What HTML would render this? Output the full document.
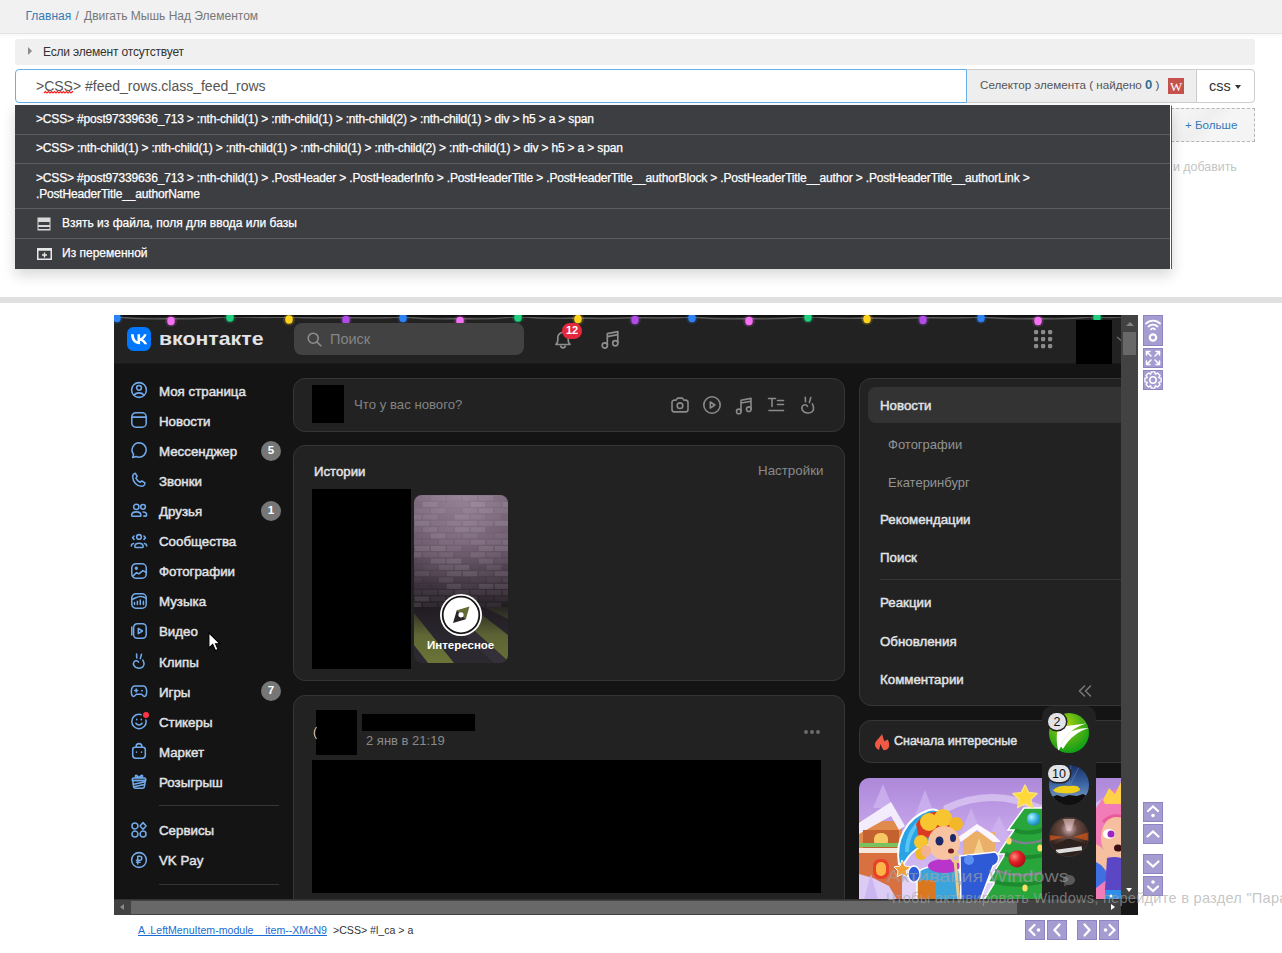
<!DOCTYPE html>
<html><head><meta charset="utf-8">
<style>
*{box-sizing:border-box;margin:0;padding:0}
html,body{width:1282px;height:953px;overflow:hidden;background:#fff;font-family:"Liberation Sans",sans-serif}
.a{position:absolute}
.t{position:absolute;white-space:nowrap;line-height:1}
svg.a{overflow:visible}
#crumb{left:0;top:0;width:1282px;height:34px;background:#f1f1f1;border-bottom:1px solid #e2e2e2;box-shadow:0 2px 4px rgba(0,0,0,.035)}
#panel{left:15px;top:39px;width:1240px;height:26px;background:#f0f0f0;border-radius:3px}
#inp{left:15px;top:69px;width:952px;height:34px;border:1px solid #66afe9;border-radius:4px 0 0 4px;background:#fff}
#addon{left:967px;top:69px;width:230px;height:34px;background:#eee;border:1px solid #ccc;border-left:0}
#cssb{left:1196px;top:69px;width:59px;height:34px;background:#fff;border:1px solid #ccc;border-radius:0 4px 4px 0}
#more{left:1171px;top:108px;width:84px;height:34px;border:1px dashed #b5b5b5;background:linear-gradient(135deg,#f7f7f7 0%,#efefef 40%,#f6f6f6 60%,#f3f3f3 100%)}
#dd{left:15px;top:105px;width:1157px;height:164px;background:#3d3e42;box-shadow:0 6px 14px rgba(0,0,0,.16);border-right:1px solid #555;border-top-right-radius:2px}
#dd .wl{position:absolute;left:1155px;top:0;width:1px;height:164px;background:#fff}
#dd .sep{position:absolute;left:0;width:1155px;height:1px;background:#5c5d61}
#dd .r{position:absolute;left:21px;color:#fff;font-size:12px;white-space:nowrap;line-height:15px;-webkit-text-stroke:0.25px #fff}
#dd .lat{letter-spacing:-0.165px}
#gbar{left:0;top:297px;width:1282px;height:6px;background:#e0e0e0}
#vk{left:114px;top:315px;width:1024px;height:600px;background:#424242;overflow:hidden}
#vp{left:0;top:0;width:1007px;height:584px;background:#141414;overflow:hidden}
.pb{position:absolute;width:20px;height:20px;background:#a59dd2;border:1px solid #8d84c3}
.pb svg{position:absolute;left:-1px;top:-1px}
</style></head><body>
<div id="crumb" class="a"></div>
<div class="t" style="left:25.5px;top:10px;font-size:12px;color:#337ab7">Главная</div><div class="t" style="left:75.5px;top:10px;font-size:12px;color:#777">/</div><div class="t" style="left:84px;top:10px;font-size:12px;color:#777">Двигать Мышь Над Элементом</div>
<div id="panel" class="a"></div>
<div class="a" style="left:28px;top:47px;width:0;height:0;border-left:4px solid #8a8a8a;border-top:4px solid transparent;border-bottom:4px solid transparent"></div>
<div class="t" style="left:43px;top:46px;font-size:12px;letter-spacing:-0.18px;color:#333">Если элемент отсутствует</div>
<div id="inp" class="a"></div>
<div class="t" style="left:36px;top:79px;font-size:14px;color:#555">&gt;CSS&gt; #feed_rows.class_feed_rows</div>
<svg class="a" style="left:44px;top:91px" width="30" height="3"><path d="M0 2 L1.5 0.5 L3 2 L4.5 0.5 L6 2 L7.5 0.5 L9 2 L10.5 0.5 L12 2 L13.5 0.5 L15 2 L16.5 0.5 L18 2 L19.5 0.5 L21 2 L22.5 0.5 L24 2 L25.5 0.5 L27 2 L28.5 0.5 L29 1" fill="none" stroke="#ff1a1a" stroke-width="1.1"/></svg>
<div id="addon" class="a"></div>
<div class="t" style="left:980px;top:78px;font-size:11.65px;color:#555">Селектор элемента ( найдено <b style="color:#31708f;font-size:13px">0</b> )</div>
<div class="a" style="left:1168px;top:78px;width:16px;height:16px;background:#c5514c;color:#fff;font-family:'Liberation Serif',serif;font-size:13px;font-weight:normal;line-height:17px;text-align:center;overflow:hidden;letter-spacing:-0.5px">W</div>
<div id="cssb" class="a"></div>
<div class="t" style="left:1209px;top:78.6px;font-size:14.4px;color:#333">css</div>
<div class="a" style="left:1234.6px;top:85px;width:0;height:0;border-top:4.2px solid #333;border-left:3.7px solid transparent;border-right:3.7px solid transparent"></div>
<div id="more" class="a"></div>
<div class="t" style="left:1185px;top:119px;font-size:11.6px;color:#337ab7">+ Больше</div>
<div class="t" style="left:1173px;top:161px;font-size:12.4px;color:#c4c4c4">и добавить</div>

<div id="dd" class="a"><div class="wl"></div>
  <div class="r lat" style="top:7px">&gt;CSS&gt; #post97339636_713 &gt; :nth-child(1) &gt; :nth-child(1) &gt; :nth-child(2) &gt; :nth-child(1) &gt; div &gt; h5 &gt; a &gt; span</div>
  <div class="sep" style="top:29px"></div>
  <div class="r lat" style="top:36px">&gt;CSS&gt; :nth-child(1) &gt; :nth-child(1) &gt; :nth-child(1) &gt; :nth-child(1) &gt; :nth-child(2) &gt; :nth-child(1) &gt; div &gt; h5 &gt; a &gt; span</div>
  <div class="sep" style="top:58px"></div>
  <div class="r lat" style="top:65px;line-height:16px">&gt;CSS&gt; #post97339636_713 &gt; :nth-child(1) &gt; .PostHeader &gt; .PostHeaderInfo &gt; .PostHeaderTitle &gt; .PostHeaderTitle__authorBlock &gt; .PostHeaderTitle__author &gt; .PostHeaderTitle__authorLink &gt;<br>.PostHeaderTitle__authorName</div>
  <div class="sep" style="top:103px"></div>
  <svg class="a" style="left:22px;top:112px" width="14" height="14"><rect x="0.5" y="0.5" width="13" height="13" fill="#d8d8d8"/><rect x="1.5" y="5" width="11" height="3" fill="#3d3e42"/><rect x="1.5" y="10" width="11" height="2" fill="#3d3e42"/></svg>
  <div class="r" style="left:47px;top:111px">Взять из файла, поля для ввода или базы</div>
  <div class="sep" style="top:133px"></div>
  <svg class="a" style="left:22px;top:143px" width="15" height="12"><rect x="0.75" y="0.75" width="13.5" height="10.5" fill="none" stroke="#e8e8e8" stroke-width="1.5"/><rect x="0.75" y="0.75" width="13.5" height="2" fill="#e8e8e8"/><path d="M7.5 4.5v5M5 7h5" stroke="#e8e8e8" stroke-width="1.4"/></svg>
  <div class="r" style="left:47px;top:141px">Из переменной</div>
</div>
<div id="gbar" class="a"></div>

<div id="vk" class="a">
  <div id="vp" class="a">
<div class="a " style="left:0px;top:0px;width:1007px;height:48px;background:#222"></div>
<div class="a " style="left:0px;top:48px;width:1007px;height:1px;background:#1b1b1b"></div>
<svg class="a" style="left:0;top:0" width="1007" height="14"><path d="M0 3 Q1.5 4.2 3 2 Q30.0 4.7 57 3.5 Q86.5 4.7 116 1.5 Q145.5 3.2 175 2.0 Q203.5 3.7 232 2.5 Q260.5 3.7 289 2 Q317.5 4.7 346 3.5 Q375.0 4.7 404 1.5 Q434.0 4.2 464 3 Q492.5 4.2 521 2.5 Q549.5 3.7 578 2 Q606.5 4.7 635 3.5 Q664.5 4.7 694 1.5 Q723.5 4.2 753 3 Q781.0 4.2 809 2.5 Q838.0 3.7 867 2 Q895.5 4.7 924 3.5 Q953.5 4.7 983 1.5 Q995.0 3.2 1007 2" fill="none" stroke="#5a5a5a" stroke-width="1.3"/><rect x="0" y="0" width="1007" height="2" fill="#111"/><ellipse cx="3" cy="3" rx="6" ry="6" fill="#2d82f5" opacity="0.18"/><ellipse cx="3" cy="3" rx="3.8" ry="4.2" fill="#2d82f5"/><ellipse cx="57" cy="6" rx="6" ry="6" fill="#f570f5" opacity="0.18"/><ellipse cx="57" cy="6" rx="3.8" ry="4.2" fill="#f570f5"/><ellipse cx="116" cy="2.5" rx="6" ry="6" fill="#1ed080" opacity="0.18"/><ellipse cx="116" cy="2.5" rx="3.8" ry="4.2" fill="#1ed080"/><ellipse cx="175" cy="4.5" rx="6" ry="6" fill="#ffd21e" opacity="0.18"/><ellipse cx="175" cy="4.5" rx="3.8" ry="4.2" fill="#ffd21e"/><ellipse cx="232" cy="5" rx="6" ry="6" fill="#b04be8" opacity="0.18"/><ellipse cx="232" cy="5" rx="3.8" ry="4.2" fill="#b04be8"/><ellipse cx="289" cy="3" rx="6" ry="6" fill="#2d82f5" opacity="0.18"/><ellipse cx="289" cy="3" rx="3.8" ry="4.2" fill="#2d82f5"/><ellipse cx="346" cy="6" rx="6" ry="6" fill="#f570f5" opacity="0.18"/><ellipse cx="346" cy="6" rx="3.8" ry="4.2" fill="#f570f5"/><ellipse cx="404" cy="2.5" rx="6" ry="6" fill="#1ed080" opacity="0.18"/><ellipse cx="404" cy="2.5" rx="3.8" ry="4.2" fill="#1ed080"/><ellipse cx="464" cy="4" rx="6" ry="6" fill="#ffd21e" opacity="0.18"/><ellipse cx="464" cy="4" rx="3.8" ry="4.2" fill="#ffd21e"/><ellipse cx="521" cy="5" rx="6" ry="6" fill="#b04be8" opacity="0.18"/><ellipse cx="521" cy="5" rx="3.8" ry="4.2" fill="#b04be8"/><ellipse cx="578" cy="3" rx="6" ry="6" fill="#2d82f5" opacity="0.18"/><ellipse cx="578" cy="3" rx="3.8" ry="4.2" fill="#2d82f5"/><ellipse cx="635" cy="6" rx="6" ry="6" fill="#f570f5" opacity="0.18"/><ellipse cx="635" cy="6" rx="3.8" ry="4.2" fill="#f570f5"/><ellipse cx="694" cy="2.5" rx="6" ry="6" fill="#1ed080" opacity="0.18"/><ellipse cx="694" cy="2.5" rx="3.8" ry="4.2" fill="#1ed080"/><ellipse cx="753" cy="4" rx="6" ry="6" fill="#ffd21e" opacity="0.18"/><ellipse cx="753" cy="4" rx="3.8" ry="4.2" fill="#ffd21e"/><ellipse cx="809" cy="5" rx="6" ry="6" fill="#b04be8" opacity="0.18"/><ellipse cx="809" cy="5" rx="3.8" ry="4.2" fill="#b04be8"/><ellipse cx="867" cy="3" rx="6" ry="6" fill="#2d82f5" opacity="0.18"/><ellipse cx="867" cy="3" rx="3.8" ry="4.2" fill="#2d82f5"/><ellipse cx="924" cy="6" rx="6" ry="6" fill="#f570f5" opacity="0.18"/><ellipse cx="924" cy="6" rx="3.8" ry="4.2" fill="#f570f5"/><ellipse cx="983" cy="2.5" rx="6" ry="6" fill="#1ed080" opacity="0.18"/><ellipse cx="983" cy="2.5" rx="3.8" ry="4.2" fill="#1ed080"/></svg>
<svg class="a" style="left:13px;top:12px;" width="24" height="24" viewBox="0 0 24 24"><rect width="24" height="24" rx="6.5" fill="#0077ff"/><path d="M12.8 17.3c-5.5 0-8.6-3.8-8.8-10h2.8c.1 4.6 2.1 6.5 3.7 6.9V7.3h2.6v3.9c1.6-.2 3.3-2 3.8-3.9h2.6c-.4 2.4-2.2 4.2-3.5 4.9 1.3.6 3.3 2.2 4.1 5.1h-2.9c-.6-1.9-2.1-3.4-4.1-3.6v3.6z" fill="#fff"/></svg>
<div class="t" style="left:45px;top:13.600000000000023px;font-size:19px;font-weight:700;color:#e1e3e6;transform:scaleX(1.12);transform-origin:0 0">вконтакте</div>
<div class="a " style="left:180px;top:8px;width:230px;height:32px;background:#424242;border-radius:8px"></div>
<svg class="a" style="left:193px;top:17px;" width="15" height="15" viewBox="0 0 15 15"><circle cx="6.2" cy="6.2" r="5" fill="none" stroke="#8d8d8d" stroke-width="1.6"/><path d="M10 10l3.8 3.8" stroke="#8d8d8d" stroke-width="1.6" stroke-linecap="round"/></svg>
<div class="t" style="left:216px;top:17px;font-size:14.5px;color:#858585">Поиск</div>
<svg class="a" style="left:438px;top:13px;" width="22" height="22" viewBox="0 0 22 22"><path d="M4 16.5c1.2-1 1.8-2.3 1.8-4.5V9.5a5.2 5.2 0 0 1 10.4 0V12c0 2.2.6 3.5 1.8 4.5z" fill="none" stroke="#8d8d8d" stroke-width="1.7" stroke-linejoin="round"/><path d="M8.7 17.5a2.3 2.3 0 0 0 4.6 0" fill="none" stroke="#8d8d8d" stroke-width="1.7"/></svg>
<div class="a " style="left:448px;top:8px;width:20px;height:16px;background:#e6283c;border-radius:8px;border:0"><div class="t" style="left:0;top:2px;width:20px;text-align:center;font-size:11px;font-weight:700;color:#fff">12</div></div>
<svg class="a" style="left:486px;top:13px;" width="22" height="22" viewBox="0 0 22 22"><path d="M7.3 17.2V5.6l10.5-1.9v11.2" fill="none" stroke="#8d8d8d" stroke-width="1.7" stroke-linejoin="round"/><path d="M7.3 8.6l10.5-1.9" stroke="#8d8d8d" stroke-width="1.7"/><circle cx="4.8" cy="17.5" r="2.6" fill="none" stroke="#8d8d8d" stroke-width="1.7"/><circle cx="15.3" cy="15.2" r="2.6" fill="none" stroke="#8d8d8d" stroke-width="1.7"/></svg>
<svg class="a" style="left:920px;top:15px;" width="19" height="19" viewBox="0 0 19 19"><rect x="0" y="0" width="4.2" height="4.2" rx="1.2" fill="#8a8a8a"/><rect x="0" y="7" width="4.2" height="4.2" rx="1.2" fill="#8a8a8a"/><rect x="0" y="14" width="4.2" height="4.2" rx="1.2" fill="#8a8a8a"/><rect x="7" y="0" width="4.2" height="4.2" rx="1.2" fill="#8a8a8a"/><rect x="7" y="7" width="4.2" height="4.2" rx="1.2" fill="#8a8a8a"/><rect x="7" y="14" width="4.2" height="4.2" rx="1.2" fill="#8a8a8a"/><rect x="14" y="0" width="4.2" height="4.2" rx="1.2" fill="#8a8a8a"/><rect x="14" y="7" width="4.2" height="4.2" rx="1.2" fill="#8a8a8a"/><rect x="14" y="14" width="4.2" height="4.2" rx="1.2" fill="#8a8a8a"/></svg>
<div class="a " style="left:962px;top:5px;width:36px;height:44px;background:#000"></div>
<svg class="a" style="left:1002px;top:21px;" width="9" height="8" viewBox="0 0 9 8"><path d="M1 1l4 3.5" stroke="#6a6a6a" stroke-width="1.4"/></svg>
<svg class="a" style="left:16px;top:66px;" width="18" height="18" viewBox="0 0 20 20"><g fill="none" stroke="#71aaeb" stroke-width="1.7" stroke-linecap="round" stroke-linejoin="round"><circle cx="10" cy="10" r="8.2"/><circle cx="10" cy="7.6" r="2.7"/><path d="M4.6 15.6c1.2-1.6 3.1-2.4 5.4-2.4s4.2.8 5.4 2.4"/></g></svg>
<div class="t" style="left:45px;top:69.80000000000001px;font-size:13.3px;color:#e1e3e6;-webkit-text-stroke:0.45px #e1e3e6">Моя страница</div>
<svg class="a" style="left:16px;top:96px;" width="18" height="18" viewBox="0 0 20 20"><g fill="none" stroke="#71aaeb" stroke-width="1.7" stroke-linecap="round" stroke-linejoin="round"><rect x="2" y="2" width="16" height="16" rx="4.5"/><path d="M2.5 6.8h15"/></g></svg>
<div class="t" style="left:45px;top:99.88px;font-size:13.3px;color:#e1e3e6;-webkit-text-stroke:0.45px #e1e3e6">Новости</div>
<svg class="a" style="left:16px;top:126px;" width="18" height="18" viewBox="0 0 20 20"><g fill="none" stroke="#71aaeb" stroke-width="1.7" stroke-linecap="round" stroke-linejoin="round"><path d="M10 2a8 8 0 0 1 0 16 8 8 0 0 1-3.2-.7L3 18.3l1-3.4A8 8 0 0 1 10 2z"/></g></svg>
<div class="t" style="left:45px;top:129.95999999999998px;font-size:13.3px;color:#e1e3e6;-webkit-text-stroke:0.45px #e1e3e6">Мессенджер</div>
<div class="a " style="left:147px;top:126px;width:20px;height:20px;background:#767676;border-radius:10px"><div class="t" style="left:0;top:4px;width:20px;text-align:center;font-size:11.5px;font-weight:700;color:#fff">5</div></div>
<svg class="a" style="left:16px;top:156px;" width="18" height="18" viewBox="0 0 20 20"><g fill="none" stroke="#71aaeb" stroke-width="1.7" stroke-linecap="round" stroke-linejoin="round"><path d="M5.8 2.5l2.2 3.4-1.4 2c.9 2 2.6 3.7 4.6 4.6l2-1.4 3.4 2.2c-.2 2.1-1.9 3.7-4 3.7C8 17 3 12 3 6.4c0-2.1 1.6-3.8 2.8-3.9z"/></g></svg>
<div class="t" style="left:45px;top:160.04000000000002px;font-size:13.3px;color:#e1e3e6;-webkit-text-stroke:0.45px #e1e3e6">Звонки</div>
<svg class="a" style="left:16px;top:186px;" width="18" height="18" viewBox="0 0 20 20"><g fill="none" stroke="#71aaeb" stroke-width="1.7" stroke-linecap="round" stroke-linejoin="round"><circle cx="7" cy="6.5" r="3"/><circle cx="14.5" cy="6.5" r="2.6"/><path d="M1.8 16c0-2.3 2.3-3.9 5.2-3.9s5.2 1.6 5.2 3.9c0 .6-.4.9-1 .9H2.8c-.6 0-1-.3-1-.9z"/><path d="M14.5 12.2c2.4 0 4 1.3 4 3.3 0 .8-.4 1.3-1.2 1.3h-2"/></g></svg>
<div class="t" style="left:45px;top:190.12px;font-size:13.3px;color:#e1e3e6;-webkit-text-stroke:0.45px #e1e3e6">Друзья</div>
<div class="a " style="left:147px;top:186px;width:20px;height:20px;background:#767676;border-radius:10px"><div class="t" style="left:0;top:4px;width:20px;text-align:center;font-size:11.5px;font-weight:700;color:#fff">1</div></div>
<svg class="a" style="left:16px;top:217px;" width="18" height="18" viewBox="0 0 20 20"><g fill="none" stroke="#71aaeb" stroke-width="1.7" stroke-linecap="round" stroke-linejoin="round"><circle cx="10" cy="5.5" r="2.6"/><path d="M5.3 16.5c0-2.4 2.1-3.9 4.7-3.9s4.7 1.5 4.7 3.9c0 .5-.4.8-1 .8H6.3c-.6 0-1-.3-1-.8z"/><path d="M4.5 4.5L2.8 6.4l1.7 1.8M15.5 4.5l1.7 1.9-1.7 1.8M1.5 15.5c0-1.3.9-2.5 2.5-2.8M18.5 15.5c0-1.3-.9-2.5-2.5-2.8"/></g></svg>
<div class="t" style="left:45px;top:220.20000000000005px;font-size:13.3px;color:#e1e3e6;-webkit-text-stroke:0.45px #e1e3e6">Сообщества</div>
<svg class="a" style="left:16px;top:247px;" width="18" height="18" viewBox="0 0 20 20"><g fill="none" stroke="#71aaeb" stroke-width="1.7" stroke-linecap="round" stroke-linejoin="round"><rect x="2" y="2" width="16" height="16" rx="4.5"/><circle cx="7" cy="6.9" r="1" fill="#71aaeb"/><path d="M3.1 15.7L7.3 11.8 9.8 13.2 14.3 9.6 18 11.5"/></g></svg>
<div class="t" style="left:45px;top:250.2800000000001px;font-size:13.3px;color:#e1e3e6;-webkit-text-stroke:0.45px #e1e3e6">Фотографии</div>
<svg class="a" style="left:16px;top:277px;" width="18" height="18" viewBox="0 0 20 20"><g fill="none" stroke="#71aaeb" stroke-width="1.7" stroke-linecap="round" stroke-linejoin="round"><rect x="2" y="2" width="16" height="16" rx="4.5"/><path d="M2.2 8C5 7.6 8 5 11.4 5S16 6 18 7M5 11.6v2.4M8.2 10.4v3.6M11.4 8.8v5.2M14.9 10.4v3.6"/></g></svg>
<div class="t" style="left:45px;top:280.3600000000001px;font-size:13.3px;color:#e1e3e6;-webkit-text-stroke:0.45px #e1e3e6">Музыка</div>
<svg class="a" style="left:16px;top:307px;" width="18" height="18" viewBox="0 0 20 20"><g fill="none" stroke="#71aaeb" stroke-width="1.7" stroke-linecap="round" stroke-linejoin="round"><rect x="4" y="2" width="14" height="16" rx="4"/><path d="M2 5.5v9M9.2 7v6l4.6-3z"/></g></svg>
<div class="t" style="left:45px;top:310.44000000000005px;font-size:13.3px;color:#e1e3e6;-webkit-text-stroke:0.45px #e1e3e6">Видео</div>
<svg class="a" style="left:16px;top:337px;" width="18" height="18" viewBox="0 0 20 20"><g fill="none" stroke="#71aaeb" stroke-width="1.7" stroke-linecap="round" stroke-linejoin="round"><path d="M7.3 2.3l.2 4.4M12.8 2.5l-1.4 4.9M9.5 11.3C8.5 9.5 5.8 9.2 4.5 11 3 13 4 17.5 9.5 18 14 18.3 16 15.5 15.5 12.5 15.3 11 14.8 9.8 14.3 8.9"/></g></svg>
<div class="t" style="left:45px;top:340.52px;font-size:13.3px;color:#e1e3e6;-webkit-text-stroke:0.45px #e1e3e6">Клипы</div>
<svg class="a" style="left:16px;top:367px;" width="18" height="18" viewBox="0 0 20 20"><g fill="none" stroke="#71aaeb" stroke-width="1.7" stroke-linecap="round" stroke-linejoin="round"><path d="M5.5 4.5h9c2.5 0 3.8 2.1 4 5.5.2 3.4-.7 6-2.6 6-1.4 0-2.2-2.3-3.4-2.3H7.5C6.3 13.7 5.5 16 4.1 16 2.2 16 1.3 13.4 1.5 10c.2-3.4 1.5-5.5 4-5.5z"/><path d="M5.2 9.4h3.4M6.9 7.7v3.4M13 9.8h.6"/></g></svg>
<div class="t" style="left:45px;top:370.6px;font-size:13.3px;color:#e1e3e6;-webkit-text-stroke:0.45px #e1e3e6">Игры</div>
<div class="a " style="left:147px;top:366px;width:20px;height:20px;background:#767676;border-radius:10px"><div class="t" style="left:0;top:4px;width:20px;text-align:center;font-size:11.5px;font-weight:700;color:#fff">7</div></div>
<svg class="a" style="left:16px;top:397px;" width="18" height="18" viewBox="0 0 20 20"><g fill="none" stroke="#71aaeb" stroke-width="1.7" stroke-linecap="round" stroke-linejoin="round"><circle cx="10" cy="10.5" r="8"/><path d="M6.6 12.5c.8 1.2 2 1.9 3.4 1.9s2.6-.7 3.4-1.9M7.5 8.2v.5M12.5 8.2v.5"/></g></svg>
<div class="t" style="left:45px;top:400.68000000000006px;font-size:13.3px;color:#e1e3e6;-webkit-text-stroke:0.45px #e1e3e6">Стикеры</div>
<svg class="a" style="left:16px;top:427px;" width="18" height="18" viewBox="0 0 20 20"><g fill="none" stroke="#71aaeb" stroke-width="1.7" stroke-linecap="round" stroke-linejoin="round"><path d="M3 8.5c0-1.7 1.1-2.6 2.6-2.6h8.8c1.5 0 2.6.9 2.6 2.6v6.3c0 1.9-1.4 3.2-3.3 3.2H6.3C4.4 18 3 16.7 3 14.8z"/><path d="M6.8 5.9V5a3.2 3.2 0 0 1 6.4 0v.9M7.2 11v.4M12.8 11v.4"/></g></svg>
<div class="t" style="left:45px;top:430.76px;font-size:13.3px;color:#e1e3e6;-webkit-text-stroke:0.45px #e1e3e6">Маркет</div>
<svg class="a" style="left:16px;top:457px;" width="18" height="18" viewBox="0 0 20 20"><g fill="none" stroke="#71aaeb" stroke-width="1.7" stroke-linecap="round" stroke-linejoin="round"><path d="M3 9.5h14l-1 6.8c-.2 1.2-1.2 1.7-2.4 1.7H6.4c-1.2 0-2.2-.5-2.4-1.7z"/><path d="M2.5 8.3c0-1 .6-1.6 1.6-1.6h11.8c1 0 1.6.6 1.6 1.6v1.2H2.5zM10 6.7C8.2 3.5 6 2.8 6 4.5 6 6 8 6.5 10 6.7c2-.2 4-.7 4-2.2 0-1.7-2.2-1-4 2.2zM4 13.5l12-2.5M4.5 16.5l11.5-2.5"/></g></svg>
<div class="t" style="left:45px;top:460.84000000000003px;font-size:13.3px;color:#e1e3e6;-webkit-text-stroke:0.45px #e1e3e6">Розыгрыш</div>
<div class="a " style="left:29px;top:397px;width:6px;height:6px;background:#ff3347;border-radius:3px;box-shadow:0 0 0 1.5px #141414"></div>
<div class="a " style="left:45px;top:490px;width:120px;height:1px;background:#363636"></div>
<svg class="a" style="left:16px;top:506px;" width="18" height="18" viewBox="0 0 20 20"><g fill="none" stroke="#71aaeb" stroke-width="1.7" stroke-linecap="round" stroke-linejoin="round"><circle cx="5.5" cy="5.5" r="3.3"/><circle cx="5.5" cy="14.5" r="3.3"/><circle cx="14.5" cy="14.5" r="3.3"/><path d="M14.5 1.8l3.4 3.7-3.4 3.7-3.4-3.7z"/></g></svg>
<div class="t" style="left:45px;top:509px;font-size:13.3px;color:#e1e3e6;-webkit-text-stroke:0.45px #e1e3e6">Сервисы</div>
<svg class="a" style="left:16px;top:536px;" width="18" height="18" viewBox="0 0 20 20"><g fill="none" stroke="#71aaeb" stroke-width="1.7" stroke-linecap="round" stroke-linejoin="round"><circle cx="10" cy="10" r="8.2"/><path d="M8.6 14.5V5.8h2.3a2.2 2.2 0 0 1 0 4.4H7.2M7.2 12.5h4"/></g></svg>
<div class="t" style="left:45px;top:539px;font-size:13.3px;color:#e1e3e6;-webkit-text-stroke:0.45px #e1e3e6">VK Pay</div>
<div class="a " style="left:45px;top:569px;width:120px;height:1px;background:#363636"></div>
<svg class="a" style="left:94px;top:317px;" width="14" height="20" viewBox="0 0 14 20"><path d="M0.9 0.9V15.9L4.7 12.5 7.4 18.5 10 17.4 7.5 11.8H12z" fill="#fff" stroke="#000" stroke-width="1.1" stroke-linejoin="miter"/></svg>
<div class="a " style="left:179px;top:63px;width:552px;height:54px;background:#222;border:1px solid #363636;border-radius:12px"></div>
<div class="a " style="left:198px;top:70px;width:32px;height:38px;background:#000"></div>
<div class="t" style="left:240px;top:83px;font-size:13.2px;color:#828282">Что у вас нового?</div>
<svg class="a" style="left:556px;top:80px;" width="20" height="20" viewBox="0 0 20 20"><g fill="none" stroke="#8a8a8a" stroke-width="1.6" stroke-linecap="round" stroke-linejoin="round"><path d="M2 7.5c0-1.4 1-2.4 2.4-2.4h1.8l1.3-2h5l1.3 2h1.8c1.4 0 2.4 1 2.4 2.4v7c0 1.4-1 2.4-2.4 2.4H4.4C3 16.9 2 15.9 2 14.5z"/><circle cx="10" cy="10.7" r="2.8"/></g></svg>
<svg class="a" style="left:588px;top:80px;" width="20" height="20" viewBox="0 0 20 20"><g fill="none" stroke="#8a8a8a" stroke-width="1.6" stroke-linecap="round" stroke-linejoin="round"><circle cx="10" cy="10" r="8.2"/><path d="M8.3 7v6l4.6-3z"/></g></svg>
<svg class="a" style="left:620px;top:80px;" width="20" height="20" viewBox="0 0 20 20"><g fill="none" stroke="#8a8a8a" stroke-width="1.6" stroke-linecap="round" stroke-linejoin="round"><path d="M7 16.2V5.2l10-1.8v10.5M7 8l10-1.8"/><circle cx="4.8" cy="16.4" r="2.3"/><circle cx="14.8" cy="14.2" r="2.3"/></g></svg>
<svg class="a" style="left:652px;top:80px;" width="20" height="20" viewBox="0 0 20 20"><g fill="none" stroke="#8a8a8a" stroke-width="1.6" stroke-linecap="round" stroke-linejoin="round"><path d="M2.5 3.5h7M6 3.5v8M11.5 5.5h6M11.5 9.5h6M3 15.5h14.5"/></g></svg>
<svg class="a" style="left:684px;top:80px;" width="20" height="20" viewBox="0 0 20 20"><g fill="none" stroke="#8a8a8a" stroke-width="1.6" stroke-linecap="round" stroke-linejoin="round"><path d="M7.3 2.3l.2 4.4M12.8 2.5l-1.4 4.9M9.5 11.3C8.5 9.5 5.8 9.2 4.5 11 3 13 4 17.5 9.5 18 14 18.3 16 15.5 15.5 12.5 15.3 11 14.8 9.8 14.3 8.9"/></g></svg>
<div class="a " style="left:179px;top:130px;width:552px;height:236px;background:#222;border:1px solid #363636;border-radius:12px"></div>
<div class="t" style="left:200px;top:149.5px;font-size:13.2px;color:#e1e3e6;-webkit-text-stroke:0.45px #e1e3e6">Истории</div>
<div class="t" style="left:644px;top:149px;font-size:13.35px;color:#8a8a8a">Настройки</div>
<div class="a " style="left:198px;top:174px;width:99px;height:180px;background:#000"></div>
<svg class="a" style="left:300px;top:180px" width="94" height="168" viewBox="0 0 94 168">
<defs>
<clipPath id="scl"><rect width="94" height="168" rx="8"/></clipPath>
<linearGradient id="sg" x1="0" y1="0" x2="0" y2="1"><stop offset="0" stop-color="#6e5c6e"/><stop offset=".3" stop-color="#5a485a"/><stop offset=".55" stop-color="#372c37"/><stop offset=".68" stop-color="#1c181d"/></linearGradient>
<radialGradient id="sr" cx=".5" cy="0" r=".9"><stop offset="0" stop-color="#b8a2b8" stop-opacity=".5"/><stop offset="1" stop-color="#b8a2b8" stop-opacity="0"/></radialGradient>
<linearGradient id="fl" x1="0" y1="0" x2="0" y2="1"><stop offset="0" stop-color="#1e1a1f" stop-opacity=".85"/><stop offset=".5" stop-color="#1e1a1f" stop-opacity=".15"/><stop offset="1" stop-color="#1e1a1f" stop-opacity="0"/></linearGradient>
</defs>
<g clip-path="url(#scl)">
<rect width="94" height="168" fill="url(#sg)"/>
<rect width="94" height="112" fill="url(#sr)"/>
<rect x="0.6" y="0.6" width="14.8" height="5.1" fill="#fff" opacity="0.039"/><rect x="16.6" y="0.6" width="14.8" height="5.1" fill="#fff" opacity="0.075"/><rect x="32.6" y="0.6" width="14.8" height="5.1" fill="#fff" opacity="0.054"/><rect x="48.6" y="0.6" width="14.8" height="5.1" fill="#fff" opacity="0.082"/><rect x="64.6" y="0.6" width="14.8" height="5.1" fill="#fff" opacity="0.085"/><rect x="80.6" y="0.6" width="14.8" height="5.1" fill="#fff" opacity="0.018"/><rect x="-7.4" y="6.9" width="14.8" height="5.1" fill="#fff" opacity="0.012"/><rect x="8.6" y="6.9" width="14.8" height="5.1" fill="#fff" opacity="0.110"/><rect x="24.6" y="6.9" width="14.8" height="5.1" fill="#fff" opacity="0.041"/><rect x="40.6" y="6.9" width="14.8" height="5.1" fill="#fff" opacity="0.038"/><rect x="56.6" y="6.9" width="14.8" height="5.1" fill="#fff" opacity="0.129"/><rect x="72.6" y="6.9" width="14.8" height="5.1" fill="#fff" opacity="0.066"/><rect x="88.6" y="6.9" width="14.8" height="5.1" fill="#fff" opacity="0.110"/><rect x="0.6" y="13.2" width="14.8" height="5.1" fill="#fff" opacity="0.067"/><rect x="16.6" y="13.2" width="14.8" height="5.1" fill="#fff" opacity="0.087"/><rect x="32.6" y="13.2" width="14.8" height="5.1" fill="#fff" opacity="0.028"/><rect x="48.6" y="13.2" width="14.8" height="5.1" fill="#fff" opacity="0.086"/><rect x="64.6" y="13.2" width="14.8" height="5.1" fill="#fff" opacity="0.114"/><rect x="80.6" y="13.2" width="14.8" height="5.1" fill="#fff" opacity="0.073"/><rect x="-7.4" y="19.5" width="14.8" height="5.1" fill="#fff" opacity="0.099"/><rect x="8.6" y="19.5" width="14.8" height="5.1" fill="#fff" opacity="0.091"/><rect x="24.6" y="19.5" width="14.8" height="5.1" fill="#fff" opacity="0.018"/><rect x="40.6" y="19.5" width="14.8" height="5.1" fill="#fff" opacity="0.101"/><rect x="56.6" y="19.5" width="14.8" height="5.1" fill="#fff" opacity="0.081"/><rect x="72.6" y="19.5" width="14.8" height="5.1" fill="#fff" opacity="0.046"/><rect x="88.6" y="19.5" width="14.8" height="5.1" fill="#fff" opacity="0.014"/><rect x="0.6" y="25.8" width="14.8" height="5.1" fill="#fff" opacity="0.114"/><rect x="16.6" y="25.8" width="14.8" height="5.1" fill="#fff" opacity="0.067"/><rect x="32.6" y="25.8" width="14.8" height="5.1" fill="#fff" opacity="0.096"/><rect x="48.6" y="25.8" width="14.8" height="5.1" fill="#fff" opacity="0.115"/><rect x="64.6" y="25.8" width="14.8" height="5.1" fill="#fff" opacity="0.096"/><rect x="80.6" y="25.8" width="14.8" height="5.1" fill="#fff" opacity="0.121"/><rect x="-7.4" y="32.1" width="14.8" height="5.1" fill="#fff" opacity="0.057"/><rect x="8.6" y="32.1" width="14.8" height="5.1" fill="#fff" opacity="0.106"/><rect x="24.6" y="32.1" width="14.8" height="5.1" fill="#fff" opacity="0.063"/><rect x="40.6" y="32.1" width="14.8" height="5.1" fill="#fff" opacity="0.122"/><rect x="56.6" y="32.1" width="14.8" height="5.1" fill="#fff" opacity="0.115"/><rect x="72.6" y="32.1" width="14.8" height="5.1" fill="#fff" opacity="0.022"/><rect x="88.6" y="32.1" width="14.8" height="5.1" fill="#fff" opacity="0.026"/><rect x="0.6" y="38.4" width="14.8" height="5.1" fill="#fff" opacity="0.036"/><rect x="16.6" y="38.4" width="14.8" height="5.1" fill="#fff" opacity="0.126"/><rect x="32.6" y="38.4" width="14.8" height="5.1" fill="#fff" opacity="0.062"/><rect x="48.6" y="38.4" width="14.8" height="5.1" fill="#fff" opacity="0.085"/><rect x="64.6" y="38.4" width="14.8" height="5.1" fill="#fff" opacity="0.046"/><rect x="80.6" y="38.4" width="14.8" height="5.1" fill="#fff" opacity="0.071"/><rect x="-7.4" y="44.7" width="14.8" height="5.1" fill="#fff" opacity="0.056"/><rect x="8.6" y="44.7" width="14.8" height="5.1" fill="#fff" opacity="0.052"/><rect x="24.6" y="44.7" width="14.8" height="5.1" fill="#fff" opacity="0.080"/><rect x="40.6" y="44.7" width="14.8" height="5.1" fill="#fff" opacity="0.080"/><rect x="56.6" y="44.7" width="14.8" height="5.1" fill="#fff" opacity="0.119"/><rect x="72.6" y="44.7" width="14.8" height="5.1" fill="#fff" opacity="0.092"/><rect x="88.6" y="44.7" width="14.8" height="5.1" fill="#fff" opacity="0.121"/><rect x="0.6" y="51.0" width="14.8" height="5.1" fill="#fff" opacity="0.113"/><rect x="16.6" y="51.0" width="14.8" height="5.1" fill="#fff" opacity="0.129"/><rect x="32.6" y="51.0" width="14.8" height="5.1" fill="#fff" opacity="0.091"/><rect x="48.6" y="51.0" width="14.8" height="5.1" fill="#fff" opacity="0.030"/><rect x="64.6" y="51.0" width="14.8" height="5.1" fill="#fff" opacity="0.113"/><rect x="80.6" y="51.0" width="14.8" height="5.1" fill="#fff" opacity="0.126"/><rect x="-7.4" y="57.3" width="14.8" height="5.1" fill="#fff" opacity="0.119"/><rect x="8.6" y="57.3" width="14.8" height="5.1" fill="#fff" opacity="0.078"/><rect x="24.6" y="57.3" width="14.8" height="5.1" fill="#fff" opacity="0.096"/><rect x="40.6" y="57.3" width="14.8" height="5.1" fill="#fff" opacity="0.035"/><rect x="56.6" y="57.3" width="14.8" height="5.1" fill="#fff" opacity="0.110"/><rect x="72.6" y="57.3" width="14.8" height="5.1" fill="#fff" opacity="0.079"/><rect x="88.6" y="57.3" width="14.8" height="5.1" fill="#fff" opacity="0.044"/><rect x="0.6" y="63.6" width="14.8" height="5.1" fill="#fff" opacity="0.018"/><rect x="16.6" y="63.6" width="14.8" height="5.1" fill="#fff" opacity="0.112"/><rect x="32.6" y="63.6" width="14.8" height="5.1" fill="#fff" opacity="0.129"/><rect x="48.6" y="63.6" width="14.8" height="5.1" fill="#fff" opacity="0.021"/><rect x="64.6" y="63.6" width="14.8" height="5.1" fill="#fff" opacity="0.106"/><rect x="80.6" y="63.6" width="14.8" height="5.1" fill="#fff" opacity="0.059"/><rect x="-7.4" y="69.9" width="14.8" height="5.1" fill="#fff" opacity="0.028"/><rect x="8.6" y="69.9" width="14.8" height="5.1" fill="#fff" opacity="0.045"/><rect x="24.6" y="69.9" width="14.8" height="5.1" fill="#fff" opacity="0.102"/><rect x="40.6" y="69.9" width="14.8" height="5.1" fill="#fff" opacity="0.115"/><rect x="56.6" y="69.9" width="14.8" height="5.1" fill="#fff" opacity="0.015"/><rect x="72.6" y="69.9" width="14.8" height="5.1" fill="#fff" opacity="0.084"/><rect x="88.6" y="69.9" width="14.8" height="5.1" fill="#fff" opacity="0.015"/><rect x="0.6" y="76.2" width="14.8" height="5.1" fill="#fff" opacity="0.096"/><rect x="16.6" y="76.2" width="14.8" height="5.1" fill="#fff" opacity="0.050"/><rect x="32.6" y="76.2" width="14.8" height="5.1" fill="#fff" opacity="0.116"/><rect x="48.6" y="76.2" width="14.8" height="5.1" fill="#fff" opacity="0.128"/><rect x="64.6" y="76.2" width="14.8" height="5.1" fill="#fff" opacity="0.071"/><rect x="80.6" y="76.2" width="14.8" height="5.1" fill="#fff" opacity="0.130"/><rect x="-7.4" y="82.5" width="14.8" height="5.1" fill="#fff" opacity="0.047"/><rect x="8.6" y="82.5" width="14.8" height="5.1" fill="#fff" opacity="0.019"/><rect x="24.6" y="82.5" width="14.8" height="5.1" fill="#fff" opacity="0.082"/><rect x="40.6" y="82.5" width="14.8" height="5.1" fill="#fff" opacity="0.014"/><rect x="56.6" y="82.5" width="14.8" height="5.1" fill="#fff" opacity="0.034"/><rect x="72.6" y="82.5" width="14.8" height="5.1" fill="#fff" opacity="0.059"/><rect x="88.6" y="82.5" width="14.8" height="5.1" fill="#fff" opacity="0.083"/><rect x="0.6" y="88.8" width="14.8" height="5.1" fill="#fff" opacity="0.029"/><rect x="16.6" y="88.8" width="14.8" height="5.1" fill="#fff" opacity="0.015"/><rect x="32.6" y="88.8" width="14.8" height="5.1" fill="#fff" opacity="0.114"/><rect x="48.6" y="88.8" width="14.8" height="5.1" fill="#fff" opacity="0.048"/><rect x="64.6" y="88.8" width="14.8" height="5.1" fill="#fff" opacity="0.125"/><rect x="80.6" y="88.8" width="14.8" height="5.1" fill="#fff" opacity="0.118"/><rect x="-7.4" y="95.1" width="14.8" height="5.1" fill="#fff" opacity="0.055"/><rect x="8.6" y="95.1" width="14.8" height="5.1" fill="#fff" opacity="0.065"/><rect x="24.6" y="95.1" width="14.8" height="5.1" fill="#fff" opacity="0.072"/><rect x="40.6" y="95.1" width="14.8" height="5.1" fill="#fff" opacity="0.087"/><rect x="56.6" y="95.1" width="14.8" height="5.1" fill="#fff" opacity="0.081"/><rect x="72.6" y="95.1" width="14.8" height="5.1" fill="#fff" opacity="0.077"/><rect x="88.6" y="95.1" width="14.8" height="5.1" fill="#fff" opacity="0.084"/><rect x="0.6" y="101.4" width="14.8" height="5.1" fill="#fff" opacity="0.123"/><rect x="16.6" y="101.4" width="14.8" height="5.1" fill="#fff" opacity="0.071"/><rect x="32.6" y="101.4" width="14.8" height="5.1" fill="#fff" opacity="0.062"/><rect x="48.6" y="101.4" width="14.8" height="5.1" fill="#fff" opacity="0.096"/><rect x="64.6" y="101.4" width="14.8" height="5.1" fill="#fff" opacity="0.039"/><rect x="80.6" y="101.4" width="14.8" height="5.1" fill="#fff" opacity="0.046"/><rect x="-7.4" y="107.7" width="14.8" height="5.1" fill="#fff" opacity="0.127"/><rect x="8.6" y="107.7" width="14.8" height="5.1" fill="#fff" opacity="0.073"/><rect x="24.6" y="107.7" width="14.8" height="5.1" fill="#fff" opacity="0.076"/><rect x="40.6" y="107.7" width="14.8" height="5.1" fill="#fff" opacity="0.011"/><rect x="56.6" y="107.7" width="14.8" height="5.1" fill="#fff" opacity="0.060"/><rect x="72.6" y="107.7" width="14.8" height="5.1" fill="#fff" opacity="0.080"/><rect x="88.6" y="107.7" width="14.8" height="5.1" fill="#fff" opacity="0.012"/>
<rect y="112" width="94" height="56" fill="#2d2931"/>
<path d="M0 118L40 168H14L0 150z" fill="#6b7438"/>
<path d="M34 112L58 112 94 140 94 166z" fill="#6b7438" opacity=".95"/>
<path d="M70 112H94V124z" fill="#5d6534"/>
<path d="M20 112H34L94 166V168H80z" fill="#3a3540" opacity=".6"/>
<rect y="112" width="94" height="56" fill="url(#fl)"/>
</g>
</svg>
<svg class="a" style="left:326px;top:279px;" width="42" height="42" viewBox="0 0 42 42"><circle cx="21" cy="21" r="21" fill="#fff"/><circle cx="21" cy="21" r="18.3" fill="none" stroke="#1a1618" stroke-width="1.8"/><path d="M29.5 12.5L25.8 25.2 16.8 16.2z" fill="#636a33"/><path d="M13 29L16.8 16.2 25.8 25.2z" fill="#2a2428"/><circle cx="21" cy="20.8" r="2.6" fill="#fff"/></svg>
<div class="t" style="left:313px;top:325px;font-size:11.5px;font-weight:700;color:#fff">Интересное</div>
<div class="a " style="left:179px;top:380px;width:552px;height:260px;background:#222;border:1px solid #363636;border-radius:12px"></div>
<div class="a " style="left:202px;top:395px;width:41px;height:45px;background:#000"></div>
<div class="a " style="left:248px;top:399px;width:113px;height:17px;background:#000"></div>
<div class="t" style="left:252px;top:419px;font-size:13px;color:#8a8a8a">2 янв в 21:19</div>
<svg class="a" style="left:689px;top:413px;" width="18" height="8" viewBox="0 0 18 8"><circle cx="3" cy="4" r="1.9" fill="#6e6e6e"/><circle cx="9" cy="4" r="1.9" fill="#6e6e6e"/><circle cx="15" cy="4" r="1.9" fill="#6e6e6e"/></svg>
<div class="a " style="left:198px;top:445px;width:509px;height:133px;background:#000"></div>
<svg class="a" style="left:199px;top:411px;" width="4" height="14" viewBox="0 0 4 14"><path d="M3.5 1C2 3 1.2 5 1.2 7s.8 4 2.3 6" fill="none" stroke="#c8b49a" stroke-width="1.2"/></svg>
<div class="a " style="left:745px;top:63px;width:280px;height:328px;background:#222;border:1px solid #363636;border-radius:12px"></div>
<div class="a " style="left:754px;top:72px;width:270px;height:36px;background:#333;border-radius:8px"></div>
<div class="t" style="left:766px;top:84px;font-size:13.3px;color:#e1e3e6;-webkit-text-stroke:0.45px #e1e3e6">Новости</div>
<div class="t" style="left:774px;top:123px;font-size:13px;color:#939393">Фотографии</div>
<div class="t" style="left:774px;top:161px;font-size:13px;color:#939393">Екатеринбург</div>
<div class="t" style="left:766px;top:198px;font-size:13.3px;color:#e1e3e6;-webkit-text-stroke:0.45px #e1e3e6">Рекомендации</div>
<div class="t" style="left:766px;top:236px;font-size:13.3px;color:#e1e3e6;-webkit-text-stroke:0.45px #e1e3e6">Поиск</div>
<div class="a " style="left:766px;top:264px;width:260px;height:1px;background:#363636"></div>
<div class="t" style="left:766px;top:281px;font-size:13.3px;color:#e1e3e6;-webkit-text-stroke:0.45px #e1e3e6">Реакции</div>
<div class="t" style="left:766px;top:320px;font-size:13.3px;color:#e1e3e6;-webkit-text-stroke:0.45px #e1e3e6">Обновления</div>
<div class="t" style="left:766px;top:358px;font-size:13.3px;color:#e1e3e6;-webkit-text-stroke:0.45px #e1e3e6">Комментарии</div>
<svg class="a" style="left:963px;top:369px;" width="16" height="14" viewBox="0 0 16 14"><path d="M7.5 2L2.5 7l5 5M13.5 2l-5 5 5 5" fill="none" stroke="#777" stroke-width="1.6" stroke-linecap="round" stroke-linejoin="round"/></svg>
<div class="a " style="left:745px;top:405px;width:280px;height:43px;background:#222;border:1px solid #363636;border-radius:12px"></div>
<svg class="a" style="left:760px;top:418px;" width="17" height="18" viewBox="0 0 17 18"><path d="M8 1C8.6 3.5 9.6 5.6 10.2 8.2L13.6 6.4C15 8.5 15.4 11 15.1 13.2 14.6 16 12.2 17.4 9.6 17.3 8.2 15.2 7.2 13.2 6.6 11 6 13 5.5 15 5 17 2.6 16 1 14 1 11.5 1 8 5.2 5.6 8 1z" fill="#f05a44"/></svg>
<div class="t" style="left:780px;top:420px;font-size:12.5px;color:#e1e3e6;-webkit-text-stroke:0.45px #e1e3e6">Сначала интересные</div>
<svg class="a" style="left:745px;top:463px;overflow:hidden" width="262" height="125" viewBox="0 0 262 125">
<defs>
<linearGradient id="sky" x1="0" y1="0" x2="0" y2="1"><stop offset="0" stop-color="#ad88da"/><stop offset=".45" stop-color="#c8a8ec"/><stop offset="1" stop-color="#dccaf4"/></linearGradient>
<clipPath id="bclip"><path d="M10 0H262V125H0V10A10 10 0 0 1 10 0z"/></clipPath>
<radialGradient id="rball" cx=".35" cy=".35" r=".7"><stop offset="0" stop-color="#ff8a7a"/><stop offset=".5" stop-color="#e11d25"/><stop offset="1" stop-color="#a80e18"/></radialGradient>
<radialGradient id="bball" cx=".35" cy=".35" r=".7"><stop offset="0" stop-color="#b9f3ff"/><stop offset=".55" stop-color="#3cb6e4"/><stop offset="1" stop-color="#1d7fb8"/></radialGradient>
</defs>
<g clip-path="url(#bclip)">
<rect width="262" height="125" fill="url(#sky)"/>
<path d="M100 60L112 30 124 60zM128 62L140 38 152 62zM55 40L66 12 77 40zM190 50L200 26 210 50zM14 30L24 6 34 30z" fill="#cdb4ef" opacity=".75"/>
<path d="M88 30Q130 10 175 28T250 20" fill="none" stroke="#efe4fb" stroke-width="7" opacity=".5" stroke-linecap="round"/>
<ellipse cx="150" cy="122" rx="130" ry="34" fill="#e2d3f6"/>
<!-- left house -->
<rect x="0" y="43" width="43" height="82" fill="#e08a4e"/>
<path d="M-2 46L32 24 46 48 40 52 32 38 0 56z" fill="#f3ecfc"/>
<rect x="4" y="52" width="36" height="20" fill="#c3612f"/>
<rect x="15" y="55" width="14" height="14" rx="6" fill="#f7c764"/>
<rect x="0" y="65" width="43" height="4" fill="#7ac25f"/>
<rect x="0" y="70" width="43" height="5" fill="#f7e6de"/>
<rect x="0" y="75" width="43" height="50" fill="#d97040"/>
<rect x="14" y="81" width="16" height="20" rx="7" fill="#e8402a"/>
<rect x="17" y="84" width="10" height="14" rx="5" fill="#ffb447"/>
<path d="M0 96L14 100 30 108 40 125H0z" fill="#dccbf5"/>
<path d="M4 125L12 96 20 125z" fill="#cbb6ef"/>
<!-- mid house -->
<rect x="104" y="54" width="32" height="30" fill="#eab06a"/>
<path d="M98 60L118 46 134 56 142 64 134 64 118 52 102 64z" fill="#fbf6ff"/>
<path d="M112 84L120 60 128 84z" fill="#f6d08e"/>
<!-- gnome hat -->
<path d="M40 86C36 64 46 40 70 32 78 30 84 34 82 42L76 66C62 66 50 74 44 88z" fill="#2aa3e6" stroke="#fff" stroke-width="2"/>
<path d="M48 74C48 58 56 44 70 38" stroke="#6fd3f7" stroke-width="4" fill="none" opacity=".7"/>
<path d="M43 82l3 6 6 1-5 4 2 6-6-3-5 3 1-6-4-4 6-1z" fill="#f1a13a" stroke="#fff" stroke-width="1"/>
<path d="M57 46C64 34 80 30 92 38L90 58 60 60z" fill="#dc3a22"/>
<!-- body -->
<path d="M58 96C62 88 80 86 100 92L104 125H58z" fill="#3ca4dc" stroke="#fff" stroke-width="1.5"/>
<ellipse cx="85" cy="88" rx="16" ry="7" fill="#b934ca"/>
<ellipse cx="55" cy="96" rx="6" ry="8" fill="#2e5ed8" stroke="#fff" stroke-width="1.5"/>
<rect x="59" y="102" width="17" height="23" rx="3" fill="#d9781f"/>
<!-- hair + face -->
<circle cx="70" cy="44" r="9" fill="#f7c52f"/>
<circle cx="84" cy="40" r="9" fill="#f7c52f"/>
<circle cx="97" cy="46" r="7" fill="#f2b82a"/>
<circle cx="62" cy="64" r="7" fill="#f7c52f"/>
<circle cx="62" cy="76" r="6" fill="#f2b82a"/>
<ellipse cx="85" cy="65" rx="16" ry="17" fill="#f7c3a1"/>
<ellipse cx="67" cy="73" rx="5" ry="6" fill="#f3b291"/>
<ellipse cx="80.5" cy="63" rx="4" ry="4.5" fill="#1c2a6c"/>
<ellipse cx="94" cy="60" rx="3" ry="4" fill="#1c2a6c"/>
<ellipse cx="92" cy="73" rx="3" ry="2.5" fill="#6a1d1d"/>
<path d="M96 82L100 125" stroke="#ecc985" stroke-width="3"/>
<circle cx="97" cy="80" r="4" fill="none" stroke="#ecc985" stroke-width="2.5"/>
<!-- scroll -->
<path d="M101 78L136 74C142 78 140 86 134 88L120 125H102z" fill="#2f5ad6" stroke="#fff" stroke-width="1.5"/>
<circle cx="110" cy="82" r="5" fill="#5c8ff3"/>
<!-- tree -->
<path d="M165 30L149 52H155L139 76H146L129 104H136L123 125H215V30z" fill="#28a63b" stroke="#fff" stroke-width="1.5"/>
<path d="M156 52Q168 58 190 50M146 76Q170 84 200 72M136 104Q170 112 205 96" stroke="#1d8a2f" stroke-width="4" fill="none"/>
<path d="M150 60Q168 72 196 56M136 92Q166 104 200 88" stroke="#7c828c" stroke-width="2.5" fill="none"/>
<path d="M166 7l3.6 7.6 8.4 1-6.2 5.8 1.6 8.3-7.4-4.1-7.4 4.1 1.6-8.3-6.2-5.8 8.4-1z" fill="#ffd83a" stroke="#f6e27a" stroke-width="1.5" stroke-linejoin="round"/>
<circle cx="174.5" cy="41" r="6.6" fill="url(#bball)"/>
<circle cx="158" cy="81" r="8.5" fill="url(#rball)"/>
<ellipse cx="150" cy="63" rx="2.6" ry="3.6" fill="#ffe066"/>
<ellipse cx="166" cy="110" rx="2.6" ry="3.6" fill="#ffe066"/>
<ellipse cx="181" cy="70" rx="2.6" ry="3.6" fill="#ffe066"/>
<!-- girl -->
<path d="M237 30Q248 12 262 10V125H237z" fill="#f27cb8"/>
<path d="M244 22L250 10 256 16 262 4V26H246z" fill="#ffd24a"/>
<ellipse cx="262" cy="60" rx="20" ry="24" fill="#f6bfa0"/>
<path d="M244 44Q252 36 262 38" stroke="#e85a9a" stroke-width="3" fill="none"/>
<ellipse cx="250" cy="56" rx="6" ry="5" fill="#fff"/>
<circle cx="252" cy="56" r="3.5" fill="#9b25c0"/>
<ellipse cx="259" cy="70" rx="4" ry="3.5" fill="#3a1010"/>
<path d="M237 66Q246 70 252 84L248 92 237 90z" fill="#f6bfa0"/>
<path d="M237 84Q246 88 250 100L237 110z" fill="#3f6fe0"/>
<path d="M248 80Q256 78 262 80V112H246z" fill="#5b47c6"/>
<path d="M246 112H262V125H246z" fill="#2f8fe8"/>
<circle cx="252" cy="118" r="1.5" fill="#fff"/><circle cx="258" cy="122" r="1.2" fill="#fff"/>
</g>
</svg>

<div class="a " style="left:928px;top:391px;width:54px;height:200px;background:#222;border-radius:10px 10px 0 0"></div>
<svg class="a" style="left:935px;top:398px;" width="40" height="40" viewBox="0 0 40 40"><defs><radialGradient id="gg" cx="40%" cy="30%" r="70%"><stop offset="0" stop-color="#b4d80c"/><stop offset=".55" stop-color="#52b214"/><stop offset="1" stop-color="#12a016"/></radialGradient></defs><clipPath id="cg"><circle cx="20" cy="20" r="20"/></clipPath><circle cx="20" cy="20" r="20" fill="url(#gg)"/><g clip-path="url(#cg)"><path d="M9 14L37.5 10.5C31 12.5 26 15 22 18.5 28 16 34 15 40 15 30 18 21 24 14 36L12 33.5 9.5 38C7 30 7.5 21 9 14z" fill="#fff"/><path d="M22 18.5C18 22 14 27 12 32" stroke="#e6f2da" stroke-width="1" fill="none"/></g></svg>
<div class="a " style="left:934px;top:398px;width:18px;height:17px;background:#e1e3e6;border-radius:9px;box-shadow:0 0 0 1.5px #222"><div class="t" style="left:0;top:2.5px;width:18px;text-align:center;font-size:12.5px;color:#111">2</div></div>
<svg class="a" style="left:935px;top:450px;" width="40" height="40" viewBox="0 0 40 40"><defs><linearGradient id="gb" x1="0" y1="0" x2="0" y2="1"><stop offset="0" stop-color="#183064"/><stop offset=".5" stop-color="#3e68a8"/><stop offset=".8" stop-color="#6f8fb8"/><stop offset="1" stop-color="#22324a"/></linearGradient><clipPath id="cb"><circle cx="20" cy="20" r="20"/></clipPath></defs><g clip-path="url(#cb)"><rect width="40" height="40" fill="url(#gb)"/><path d="M22 0L20 20M30 2L21 20M12 3L19 20" stroke="#8fb0e0" stroke-width="1" opacity=".35"/><path d="M4 25C8 21 14 20 20 21 26 20 31 21 31 25 28 28 20 29 12 28 8 28 5 27 4 25z" fill="#f0cf1c"/><path d="M0 33L8 30 14 32 20 30 28 31 34 29 40 32V40H0z" fill="#101010"/></g></svg>
<div class="a " style="left:934px;top:450px;width:22px;height:17px;background:#e1e3e6;border-radius:9px;box-shadow:0 0 0 1.5px #222"><div class="t" style="left:0;top:2.5px;width:22px;text-align:center;font-size:12.5px;color:#111">10</div></div>
<svg class="a" style="left:935px;top:502px;" width="40" height="40" viewBox="0 0 40 40"><defs><clipPath id="cc"><circle cx="20" cy="20" r="20"/></clipPath><radialGradient id="gc" cx=".5" cy=".3" r=".6"><stop offset="0" stop-color="#d9b7c0"/><stop offset=".35" stop-color="#6a4a40"/><stop offset="1" stop-color="#2a1d19"/></radialGradient></defs><g clip-path="url(#cc)"><rect width="40" height="40" fill="url(#gc)"/><path d="M0 18L16 20 0 24zM40 15L24 20 40 24z" fill="#c0521c" opacity=".85"/><path d="M14 2L18 14H22L26 2z" fill="#e8c8c8" opacity=".55"/><path d="M0 30L18 22 22 22 40 28V40H0z" fill="#2e221e"/><rect x="7" y="31" width="26" height="4" fill="#ddd" transform="rotate(-8 20 33)"/></g><circle cx="20" cy="20" r="19.5" fill="none" stroke="#3a3030" stroke-width="1"/></svg>
<svg class="a" style="left:948px;top:559px;" width="14" height="13" viewBox="0 0 14 13"><path d="M7 1C3.5 1 1 3.2 1 6c0 1.4.6 2.6 1.6 3.5L2 12.5l3.2-1.8c.6.2 1.2.3 1.8.3 3.5 0 6-2.2 6-5S10.5 1 7 1z" fill="#5a5a5a"/></svg>
  </div>
  <!-- v scrollbar -->
  <div class="a" style="left:1007px;top:0;width:17px;height:584px;background:#424242"></div>
  <div class="a" style="left:1009px;top:17px;width:13px;height:23px;background:#686868"></div>
  <div class="a" style="left:1011.5px;top:7px;width:0;height:0;border-bottom:4px solid #858585;border-left:4px solid transparent;border-right:4px solid transparent"></div>
  <div class="a" style="left:1011.7px;top:572.7px;width:0;height:0;border-top:4.3px solid #fff;border-left:3.8px solid transparent;border-right:3.8px solid transparent"></div>
  <!-- h scrollbar -->
  <div class="a" style="left:0;top:584px;width:1007px;height:16px;background:#424242;border-top:1px solid #333"></div>
  <div class="a" style="left:17px;top:586px;width:886px;height:13px;background:#686868"></div>
  <div class="a" style="left:5.8px;top:588.8px;width:0;height:0;border-right:4.3px solid #8a8a8a;border-top:3.6px solid transparent;border-bottom:3.6px solid transparent"></div>
  <div class="a" style="left:996.6px;top:588.8px;width:0;height:0;border-left:4.7px solid #fff;border-top:3.6px solid transparent;border-bottom:3.6px solid transparent"></div>
  <div class="a" style="left:1007px;top:584px;width:17px;height:16px;background:#171717"></div>
</div>

<!-- right purple buttons -->
<div class="pb" style="left:1143px;top:315px;height:31px"><svg width="20" height="31"><g fill="none" stroke="#fff" stroke-width="1.8" stroke-linecap="round"><path d="M3 8.5a10 10 0 0 1 14 0M5.5 11.5a6.5 6.5 0 0 1 9 0M8 14.3a3 3 0 0 1 4 0"/><circle cx="10" cy="22.5" r="3.2" stroke-width="2.2"/></g></svg></div>
<div class="pb" style="left:1143px;top:348px"><svg width="20" height="20"><g fill="none" stroke="#fff" stroke-width="1.5" stroke-linecap="round"><path d="M3.5 3.5l4.5 4.5M3.5 3.5h3.5M3.5 3.5v3.5M16.5 3.5l-4.5 4.5M16.5 3.5h-3.5M16.5 3.5v3.5M3.5 16.5l4.5-4.5M3.5 16.5h3.5M3.5 16.5v-3.5M16.5 16.5l-4.5-4.5M16.5 16.5h-3.5M16.5 16.5v-3.5"/></g></svg></div>
<div class="pb" style="left:1143px;top:370px"><svg width="20" height="20" viewBox="0 0 20 20"><path d="M18.10 8.19 L18.10 11.81 L15.90 12.22 L15.74 12.60 L17.01 14.45 L14.45 17.01 L12.60 15.74 L12.22 15.90 L11.81 18.10 L8.19 18.10 L7.78 15.90 L7.40 15.74 L5.55 17.01 L2.99 14.45 L4.26 12.60 L4.10 12.22 L1.90 11.81 L1.90 8.19 L4.10 7.78 L4.26 7.40 L2.99 5.55 L5.55 2.99 L7.40 4.26 L7.78 4.10 L8.19 1.90 L11.81 1.90 L12.22 4.10 L12.60 4.26 L14.45 2.99 L17.01 5.55 L15.74 7.40 L15.90 7.78z" fill="none" stroke="#fff" stroke-width="1.3" stroke-linejoin="round"/><circle cx="10" cy="10" r="3.2" fill="none" stroke="#fff" stroke-width="1.5"/></svg></div>
<div class="pb" style="left:1143px;top:802px"><svg width="20" height="20"><path d="M5 9l5-4.5L15 9" fill="none" stroke="#fff" stroke-width="2.2" stroke-linecap="round"/><circle cx="10" cy="13.5" r="1.8" fill="#fff"/></svg></div>
<div class="pb" style="left:1143px;top:824px"><svg width="20" height="20"><path d="M4.5 12.5l5.5-5 5.5 5" fill="none" stroke="#fff" stroke-width="2.2" stroke-linecap="round"/></svg></div>
<div class="pb" style="left:1143px;top:854px"><svg width="20" height="20"><path d="M4.5 7.5l5.5 5 5.5-5" fill="none" stroke="#fff" stroke-width="2.2" stroke-linecap="round"/></svg></div>
<div class="pb" style="left:1143px;top:876px"><svg width="20" height="20"><circle cx="10" cy="6" r="1.8" fill="#fff"/><path d="M5 10.5l5 4.5 5-4.5" fill="none" stroke="#fff" stroke-width="2.2" stroke-linecap="round"/></svg></div>

<!-- bottom -->
<div class="t" style="left:138px;top:925px;font-size:10.6px;color:#1a6dd0;text-decoration:underline">A .LeftMenuItem-module__item--XMcN9</div>
<div class="t" style="left:333px;top:925px;font-size:10.6px;color:#333">&gt;CSS&gt; #l_ca &gt; a</div>
<div class="pb" style="left:1025px;top:920px"><svg width="20" height="20"><path d="M9.5 5l-5 5 5 5" fill="none" stroke="#fff" stroke-width="2.2" stroke-linecap="round"/><circle cx="13.5" cy="10" r="1.8" fill="#fff"/></svg></div>
<div class="pb" style="left:1047px;top:920px"><svg width="20" height="20"><path d="M12.5 4.5l-5 5.5 5 5.5" fill="none" stroke="#fff" stroke-width="2.2" stroke-linecap="round"/></svg></div>
<div class="pb" style="left:1077px;top:920px"><svg width="20" height="20"><path d="M7.5 4.5l5 5.5-5 5.5" fill="none" stroke="#fff" stroke-width="2.2" stroke-linecap="round"/></svg></div>
<div class="pb" style="left:1099px;top:920px"><svg width="20" height="20"><circle cx="6.5" cy="10" r="1.8" fill="#fff"/><path d="M10.5 5l5 5-5 5" fill="none" stroke="#fff" stroke-width="2.2" stroke-linecap="round"/></svg></div>

<!-- windows watermark -->
<div class="t" style="left:887px;top:867.6px;font-size:17.3px;color:rgba(164,164,164,.64);transform:scaleX(1.14);transform-origin:0 0">Активация Windows</div>
<div class="t" style="left:886px;top:890.5px;font-size:14.6px;letter-spacing:0.25px;color:rgba(164,164,164,.64)">Чтобы активировать Windows, перейдите в раздел "Параметры".</div>
</body></html>
